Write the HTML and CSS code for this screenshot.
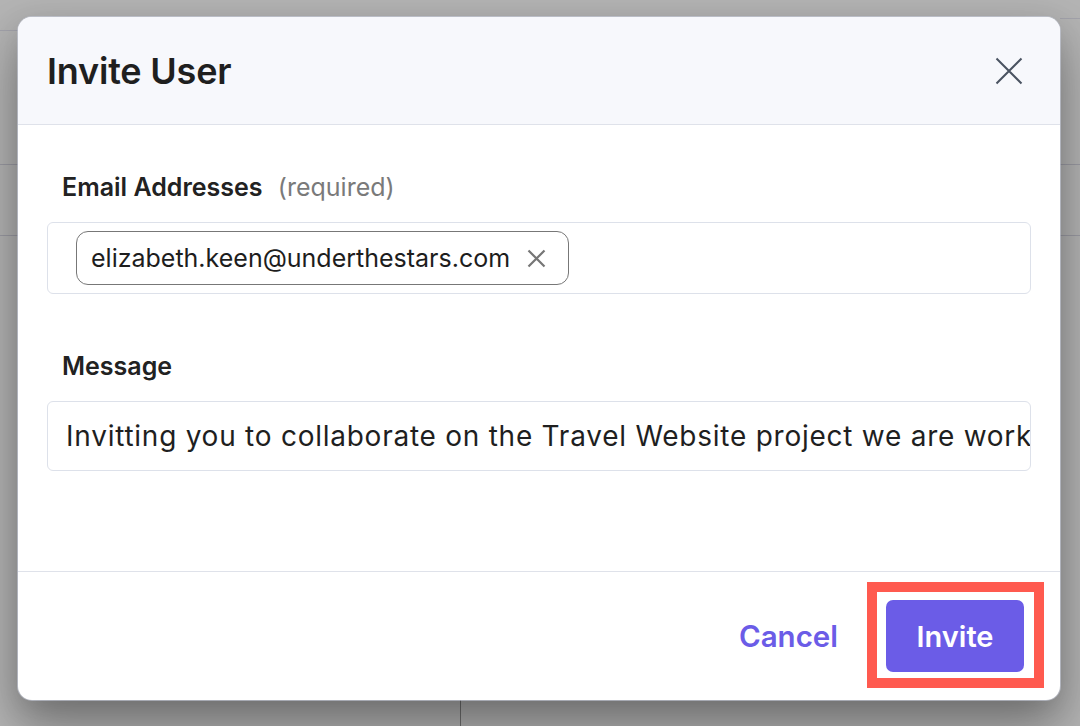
FILE: index.html
```html
<!DOCTYPE html>
<html lang="en">
<head>
<meta charset="utf-8">
<title>Invite User</title>
<link rel="stylesheet" href="styles.css">
</head>
<body>
<div class="backdrop">
  <div class="modal">
    <div class="modal-header">
      <h1 class="title">Invite User</h1>
      <button class="close" aria-label="Close">
        <svg width="28" height="28" viewBox="0 0 28 28"><path d="M1.5 1.5 L26.5 26.5 M26.5 1.5 L1.5 26.5" stroke="#4a5361" stroke-width="2" fill="none"/></svg>
      </button>
    </div>
    <div class="modal-body">
      <div class="field">
        <div class="label">Email Addresses <span class="hint">(required)</span></div>
        <div class="input tags">
          <span class="chip">elizabeth.keen@underthestars.com
            <svg class="chip-x" width="19" height="19" viewBox="0 0 19 19"><path d="M1.5 1.5 L17.5 17.5 M17.5 1.5 L1.5 17.5" stroke="#767676" stroke-width="2.2" fill="none"/></svg>
          </span>
        </div>
      </div>
      <div class="field">
        <div class="label">Message</div>
        <div class="input message">Invitting you to collaborate on the Travel Website project we are working on together.</div>
      </div>
    </div>
    <div class="modal-footer">
      <button class="btn-link">Cancel</button>
      <button class="btn-primary highlighted">Invite</button>
    </div>
  </div>
</div>
</body>
</html>
```
FILE: styles.css
```css
html, body {
  margin: 0;
  padding: 0;
}
body {
  width: 1080px;
  height: 726px;
  overflow: hidden;
  font-family: Inter, "Liberation Sans", sans-serif;
  background-color: #b3b3b3;
}
.backdrop {
  height: 726px;
  padding: 17px 20px 0 18px;
  box-sizing: border-box;
  background:
    linear-gradient(#a2a2aa, #a2a2aa) 0 30px / 18px 1px no-repeat,
    linear-gradient(#9a9aa2, #9a9aa2) 0 164px / 18px 1px no-repeat,
    linear-gradient(#9a9aa2, #9a9aa2) 0 235px / 18px 1px no-repeat,
    linear-gradient(#a2a2aa, #a2a2aa) 1060px 18px / 20px 1px no-repeat,
    linear-gradient(#9a9aa2, #9a9aa2) 1060px 164px / 20px 1px no-repeat,
    linear-gradient(#9a9aa2, #9a9aa2) 1060px 235px / 20px 1px no-repeat,
    linear-gradient(#6e6e6e, #6e6e6e) 460px 700px / 1px 26px no-repeat,
    #b3b3b3;
}
.modal {
  width: 1042px;
  height: 683px;
  background: #fff;
  border-radius: 14px;
  display: flex;
  flex-direction: column;
  overflow: hidden;
  box-shadow: 0 0 0 1px rgba(200, 205, 220, 0.6), 0 28px 50px rgba(0, 0, 0, 0.32), 0 8px 30px rgba(0, 0, 0, 0.12);
}
.modal-header {
  height: 108px;
  flex: none;
  box-sizing: border-box;
  background: #f7f8fc;
  border-bottom: 1px solid #dfe2ea;
  display: flex;
  align-items: center;
  justify-content: space-between;
  padding: 0 37px 0 29px;
}
.title {
  margin: 0;
  font-size: 36px;
  font-weight: 600;
  color: #1f1f1f;
  letter-spacing: -0.2px;
}
.close {
  border: 0;
  background: none;
  padding: 0;
  width: 28px;
  height: 28px;
  display: flex;
  cursor: pointer;
}
.modal-body {
  flex: 1;
  padding: 46px 29px 0 29px;
  display: flex;
  flex-direction: column;
  gap: 56px;
}
.field {
  display: flex;
  flex-direction: column;
  gap: 19px;
}
.label {
  padding-left: 15px;
  font-size: 25px;
  font-weight: 600;
  color: #222;
  line-height: 32px;
}
.hint {
  font-weight: 400;
  color: #7a7a7a;
  margin-left: 9px;
}
.input {
  border: 1px solid #dde1ea;
  border-radius: 6px;
  box-sizing: border-box;
}
.tags {
  height: 72px;
  display: flex;
  align-items: center;
  padding: 0 28px;
}
.chip {
  height: 54px;
  box-sizing: border-box;
  border: 1px solid #777;
  border-radius: 12px;
  display: inline-flex;
  align-items: center;
  gap: 17px;
  padding: 0 22px 0 14px;
  font-size: 25px;
  color: #1d1d1d;
}
.chip-x {
  display: block;
}
.message {
  height: 70px;
  padding: 0 18px;
  line-height: 68px;
  font-family: Inter, "Noto Sans", sans-serif;
  font-size: 28px;
  letter-spacing: 0.75px;
  color: #1f1f1f;
  white-space: nowrap;
  overflow: hidden;
}
.modal-footer {
  height: 129px;
  flex: none;
  box-sizing: border-box;
  border-top: 1px solid #dfe2ea;
  display: flex;
  align-items: center;
  justify-content: flex-end;
  gap: 48px;
  padding: 0 36px 0 0;
}
button {
  font-family: Inter, "Liberation Sans", sans-serif;
}
.btn-link {
  border: 0;
  background: none;
  padding: 0;
  font-size: 29.5px;
  font-weight: 600;
  color: #6b5ce7;
  cursor: pointer;
}
.btn-primary {
  width: 138px;
  height: 72px;
  border: 0;
  border-radius: 7px;
  background: #6b5ce7;
  color: #fff;
  font-size: 29px;
  font-weight: 600;
  cursor: pointer;
}
.highlighted {
  position: relative;
}
.highlighted::after {
  content: "";
  position: absolute;
  top: -18px;
  left: -19px;
  right: -20px;
  bottom: -16px;
  border: 10px solid #ff5a4f;
  pointer-events: none;
}
```
